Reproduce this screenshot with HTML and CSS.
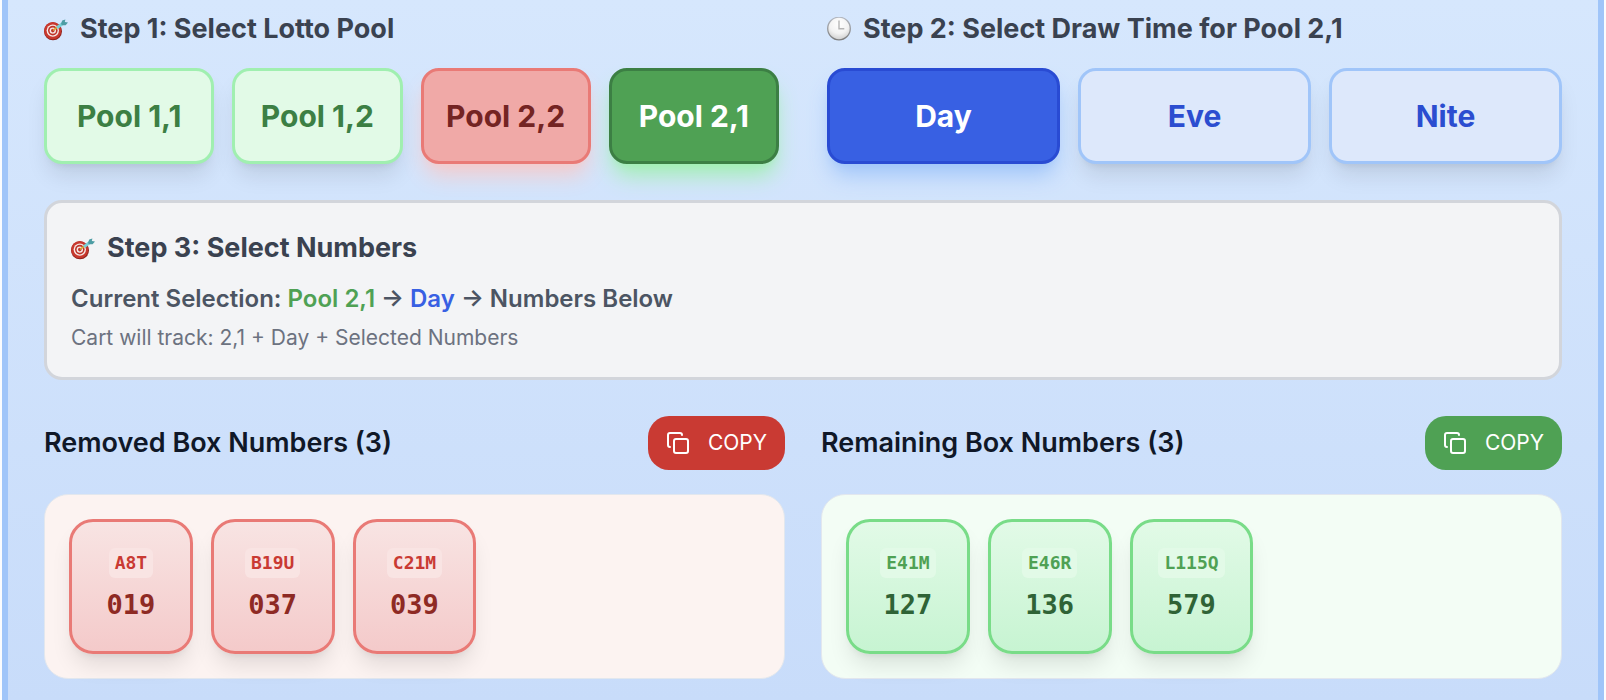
FILE: index.html
```html
<!DOCTYPE html>
<html lang="en">
<head>
  <meta charset="UTF-8">
  <meta name="viewport" content="width=device-width, initial-scale=1.0">
  <title>Lotto Pool Numbers</title>
  <link rel="stylesheet" href="styles.css">
</head>
<body>
  <svg width="0" height="0" class="sprite" aria-hidden="true">
    <defs>
      <radialGradient id="clock-face" cx="0.5" cy="0.3" r="0.7">
        <stop offset="0" stop-color="#ffffff"/>
        <stop offset="0.6" stop-color="#f2f2f2"/>
        <stop offset="1" stop-color="#cfcfcf"/>
      </radialGradient>
      <linearGradient id="clock-rim" x1="0" y1="0" x2="0" y2="1">
        <stop offset="0" stop-color="#b4b9c2"/>
        <stop offset="1" stop-color="#7d7d7d"/>
      </linearGradient>
    </defs>
    <symbol id="icon-target" viewBox="0 0 24 24">
      <circle cx="9" cy="14.3" r="9" fill="#8f231d"/>
      <circle cx="8.7" cy="13.6" r="8.6" fill="#c8382e"/>
      <circle cx="8.8" cy="13.6" r="6.2" fill="#f6e9e6"/>
      <circle cx="8.8" cy="13.6" r="4.8" fill="#bf3329"/>
      <circle cx="8.8" cy="13.6" r="3.2" fill="#f6e9e6"/>
      <circle cx="8.8" cy="13.6" r="1.8" fill="#bf3329"/>
      <path d="M9 13.4 13.6 10" stroke="#d9a437" stroke-width="1.6"/>
      <path d="M13 10.7 19 6.2" stroke="#79cfd4" stroke-width="3"/>
      <path d="M17 7 18.2 3.6 21.4 2.6 20.8 5 24 5.4 21.6 8.2 18.2 8.2Z" fill="#4d9da4"/>
    </symbol>
    <symbol id="icon-clock" viewBox="0 0 24 24">
      <circle cx="12" cy="11.5" r="11.3" fill="url(#clock-face)" stroke="url(#clock-rim)" stroke-width="1.3"/>
      <path d="M12 3.5v8.2h5.3" fill="none" stroke="#b5b5b5" stroke-width="1.4"/>
    </symbol>
    <symbol id="icon-copy" viewBox="0 0 24 24">
      <g fill="none" stroke="currentColor" stroke-width="2" stroke-linecap="round" stroke-linejoin="round">
        <rect x="8" y="8" width="14" height="14" rx="2" ry="2"/>
        <path d="M4 16c-1.1 0-2-.9-2-2V4c0-1.1.9-2 2-2h10c1.1 0 2 .9 2 2"/>
      </g>
    </symbol>
  </svg>

  <main class="panel">
    <div class="steps">
      <section>
        <h2 class="step-title"><svg class="icon" aria-hidden="true"><use href="#icon-target"/></svg>Step 1: Select Lotto Pool</h2>
        <div class="options pools">
          <button type="button" class="option green">Pool 1,1</button>
          <button type="button" class="option green">Pool 1,2</button>
          <button type="button" class="option red">Pool 2,2</button>
          <button type="button" class="option green-active">Pool 2,1</button>
        </div>
      </section>

      <section>
        <h2 class="step-title"><svg class="icon" aria-hidden="true"><use href="#icon-clock"/></svg>Step 2: Select Draw Time for Pool 2,1</h2>
        <div class="options times">
          <button type="button" class="option blue-active">Day</button>
          <button type="button" class="option blue">Eve</button>
          <button type="button" class="option blue">Nite</button>
        </div>
      </section>
    </div>

    <section class="summary">
      <h2 class="step-title"><svg class="icon" aria-hidden="true"><use href="#icon-target"/></svg>Step 3: Select Numbers</h2>
      <p class="selection">Current Selection: <span class="pool-name">Pool 2,1</span> → <span class="time-name">Day</span> → Numbers Below</p>
      <p class="tracking">Cart will track: 2,1 + Day + Selected Numbers</p>
    </section>

    <div class="results">
      <section>
        <div class="results-header">
          <h3>Removed Box Numbers (3)</h3>
          <button type="button" class="copy copy-red"><svg class="icon" aria-hidden="true"><use href="#icon-copy"/></svg>COPY</button>
        </div>
        <div class="box box-red">
          <div class="tile"><span class="code">A8T</span><span class="number">019</span></div>
          <div class="tile"><span class="code">B19U</span><span class="number">037</span></div>
          <div class="tile"><span class="code">C21M</span><span class="number">039</span></div>
        </div>
      </section>

      <section>
        <div class="results-header">
          <h3>Remaining Box Numbers (3)</h3>
          <button type="button" class="copy copy-green"><svg class="icon" aria-hidden="true"><use href="#icon-copy"/></svg>COPY</button>
        </div>
        <div class="box box-green">
          <div class="tile"><span class="code">E41M</span><span class="number">127</span></div>
          <div class="tile"><span class="code">E46R</span><span class="number">136</span></div>
          <div class="tile"><span class="code">L115Q</span><span class="number">579</span></div>
        </div>
      </section>
    </div>
  </main>
</body>
</html>
```
FILE: styles.css
```css
:root {
  --green: #4fa154;
  --green-dark: #3c7f44;
  --red: #c93a33;
  --red-border: #e97a76;
  --blue: #3860e3;
  --blue-dark: #294bd3;
  --blue-border: #a0c5f9;
  --shadow: 0 15px 22px -4px rgba(0, 0, 0, 0.1), 0 6px 9px -6px rgba(0, 0, 0, 0.1);
}

* {
  margin: 0;
  padding: 0;
  box-sizing: border-box;
}

body {
  font-family: Inter, "Liberation Sans", sans-serif;
  color: #101828;
  background: #fbfcfe;
  padding: 0 2px;
}

.sprite {
  position: absolute;
}

.panel {
  min-height: 100vh;
  padding: 8px 36px 20px;
  border: solid var(--blue-border);
  border-width: 0 6px;
  background: linear-gradient(#d6e7fd, #c8dcfa);
  display: flex;
  flex-direction: column;
  gap: 36px;
}

.icon {
  width: 24px;
  height: 24px;
  flex: none;
}

/* Steps 1 and 2 */
.steps {
  display: grid;
  grid-template-columns: 1fr 1fr;
  gap: 48px;
}

.step-title {
  display: flex;
  align-items: center;
  gap: 12px;
  font-size: 27px;
  line-height: 42px;
  font-weight: 700;
  color: #3a4250;
}

.options {
  display: grid;
  gap: 18px;
  margin-top: 18px;
}

.pools {
  grid-template-columns: repeat(4, 1fr);
}

.times {
  grid-template-columns: repeat(3, 1fr);
}

.option {
  height: 96px;
  border: 3px solid;
  border-radius: 18px;
  font-family: inherit;
  font-size: 30px;
  line-height: 42px;
  font-weight: 700;
  box-shadow: var(--shadow);
  cursor: pointer;
}

.green {
  background: #e2fae7;
  border-color: #a0efb0;
  color: var(--green-dark);
}

.green-active {
  background: var(--green);
  border-color: var(--green-dark);
  color: #fff;
  box-shadow: 0 15px 22px -4px #a0efb0, 0 6px 9px -6px #a0efb0;
}

.red {
  background: #f0a9a7;
  border-color: var(--red-border);
  color: #742423;
  box-shadow: 0 15px 22px -4px #f5cbcb, 0 6px 9px -6px #f5cbcb;
}

.blue {
  background: #dde8fb;
  border-color: var(--blue-border);
  color: #2b4dd0;
}

.blue-active {
  background: var(--blue);
  border-color: var(--blue-dark);
  color: #fff;
  box-shadow: 0 15px 22px -4px var(--blue-border), 0 6px 9px -6px var(--blue-border);
}

/* Step 3 */
.summary {
  padding: 24px;
  border: 3px solid #d2d5db;
  border-radius: 18px;
  background: #f3f4f6;
}

.selection {
  margin: 12px 0 6px;
  font-size: 24px;
  line-height: 36px;
  font-weight: 600;
  color: #4c5563;
}

.pool-name {
  color: var(--green);
}

.time-name {
  color: var(--blue);
}

.tracking {
  font-size: 21px;
  line-height: 30px;
  color: #6c7280;
}

/* Number boxes */
.results {
  display: grid;
  grid-template-columns: 1fr 1fr;
  gap: 36px;
}

.results-header {
  display: flex;
  align-items: center;
  justify-content: space-between;
  margin-bottom: 24px;
}

.results-header h3 {
  font-size: 27px;
  line-height: 42px;
  font-weight: 600;
}

.copy {
  display: flex;
  align-items: center;
  gap: 18px;
  height: 54px;
  padding: 0 18px;
  border: none;
  border-radius: 21px;
  font-family: inherit;
  font-size: 21px;
  line-height: 30px;
  color: #fff;
  cursor: pointer;
}

.copy-red {
  background: var(--red);
}

.copy-green {
  background: var(--green);
}

.box {
  display: grid;
  grid-template-columns: repeat(5, 1fr);
  gap: 18px;
  padding: 24px;
  border: 1px solid #e2e7ee;
  border-radius: 24px;
}

.box-red {
  background: #fcf3f1;
}

.box-green {
  background: #f3fdf5;
}

.tile {
  display: flex;
  flex-direction: column;
  align-items: center;
  justify-content: center;
  gap: 6px;
  min-height: 135px;
  border: 3px solid;
  border-radius: 24px;
  font-family: "DejaVu Sans Mono", monospace;
  font-weight: 700;
  box-shadow: var(--shadow);
}

.code {
  padding: 3px 6px;
  border-radius: 6px;
  font-size: 18px;
  line-height: 24px;
}

.number {
  font-size: 27px;
  line-height: 42px;
}

.box-red .tile {
  border-color: var(--red-border);
  background: linear-gradient(#f8e4e3, #f4caca);
  color: #8e2a24;
}

.box-red .code {
  background: #f9e4e3;
  color: var(--red);
}

.box-green .tile {
  border-color: #79dc88;
  background: linear-gradient(#e2fae7, #c7f4d2);
  color: #2f6336;
}

.box-green .code {
  background: #e2fae7;
  color: var(--green);
}
```
